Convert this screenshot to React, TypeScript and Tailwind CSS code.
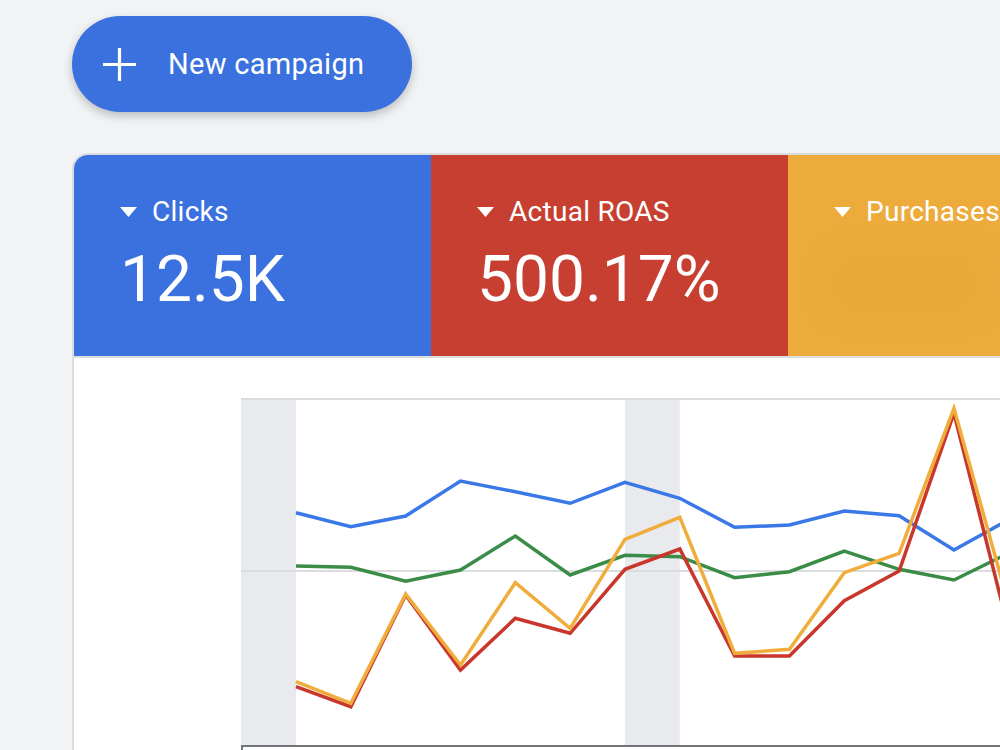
const X = Array.from({ length: 14 }, (_, i) => 55 + 54.83 * i);

const SERIES = [
  {
    color: "#3b78e7",
    ys: [114.7, 128.7, 118, 83, 93.7, 105.3, 84.3, 100.3, 129.3, 127, 113, 117.7, 152, 121.5],
  },
  {
    color: "#3a8c46",
    ys: [168, 169.3, 183.3, 172, 138, 177, 157.3, 158.7, 179.7, 173.7, 153, 171.3, 182, 155],
  },
  {
    color: "#c9372c",
    ys: [288.7, 308.7, 197, 272, 220.3, 235.3, 171.3, 151, 258, 258, 202.7, 173, 15.3, 232],
  },
  {
    color: "#f0ad3c",
    ys: [283.7, 305.3, 196, 267, 184.7, 230.3, 141.3, 119.3, 255.3, 251.3, 174.7, 155.3, 10.3, 207],
  },
];

const METRICS = [
  { label: "Clicks", value: "12.5K", bg: "bg-[#3a71de]" },
  { label: "Actual ROAS", value: "500.17%", bg: "bg-[#c63f31]" },
  { label: "Purchases", value: "", bg: "bg-[#ecab3b]" },
];

function Caret() {
  return (
    <svg width="17" height="10" viewBox="0 0 17 10" className="shrink-0">
      <path d="M0 0h17L8.5 10z" fill="white" />
    </svg>
  );
}

function PlusIcon() {
  return (
    <svg width="33" height="33" viewBox="0 0 33 33" className="shrink-0">
      <path d="M16.5 0v33M0 16.5h33" stroke="white" strokeWidth="3.2" />
    </svg>
  );
}

function MetricTile({ label, value, bg }: { label: string; value: string; bg: string }) {
  return (
    <div className={`flex h-[201px] w-[357px] shrink-0 flex-col pl-[46px] pt-[43px] ${bg}`}>
      <div className="flex items-center gap-[15px] text-[28px] leading-none tracking-[0.01em] text-white">
        <Caret />
        <span>{label}</span>
      </div>
      {value ? (
        <div className="mt-[22px] text-[64px] leading-none text-white">{value}</div>
      ) : (
        // purchases value is blurred out in the source
        <div className="ml-[-4px] mt-[26px] h-[62px] w-[150px] rounded-md bg-[#e5a535]/30 blur-md" />
      )}
    </div>
  );
}

function Chart() {
  return (
    <svg width="760" height="352" viewBox="0 0 760 352" className="block">
      <rect x="0" y="0" width="55" height="347" fill="#e8eaed" />
      <rect x="384" y="0" width="54.8" height="347" fill="#e8eaed" />
      <line x1="0" y1="1" x2="760" y2="1" stroke="#dadce0" strokeWidth="2" />
      <line x1="0" y1="173" x2="760" y2="173" stroke="#dadce0" strokeWidth="2" />
      {SERIES.map((s) => (
        <polyline
          key={s.color}
          points={s.ys.map((y, i) => `${X[i]},${y}`).join(" ")}
          fill="none"
          stroke={s.color}
          strokeWidth="3.5"
          strokeLinejoin="miter"
        />
      ))}
      <path d="M1 352V348H760" fill="none" stroke="#70757a" strokeWidth="2" />
    </svg>
  );
}

export default function App() {
  return (
    <div
      className="h-[750px] w-[1000px] overflow-hidden bg-[#f1f3f4]"
      style={{ fontFamily: "Roboto, 'Liberation Sans', sans-serif" }}
    >
      <div className="pl-[72px] pt-[16px]">
        <button className="flex h-[96px] w-[340px] items-center rounded-full bg-[#3a71de] pl-[31px] text-white shadow-[0_4px_10px_rgba(60,64,67,0.3)]">
          <PlusIcon />
          <span className="ml-[32px] mt-[2px] text-[29px] tracking-[0.01em]">New campaign</span>
        </button>
      </div>

      <div className="ml-[72px] mt-[41px] w-[1100px] overflow-hidden rounded-tl-[16px] border-l-2 border-t-2 border-[#dadce0] bg-white">
        <div className="flex border-b-2 border-[#dadce0]">
          {METRICS.map((m) => (
            <MetricTile key={m.label} {...m} />
          ))}
        </div>
        <div className="pl-[167px] pt-[40px]">
          <Chart />
        </div>
      </div>
    </div>
  );
}
